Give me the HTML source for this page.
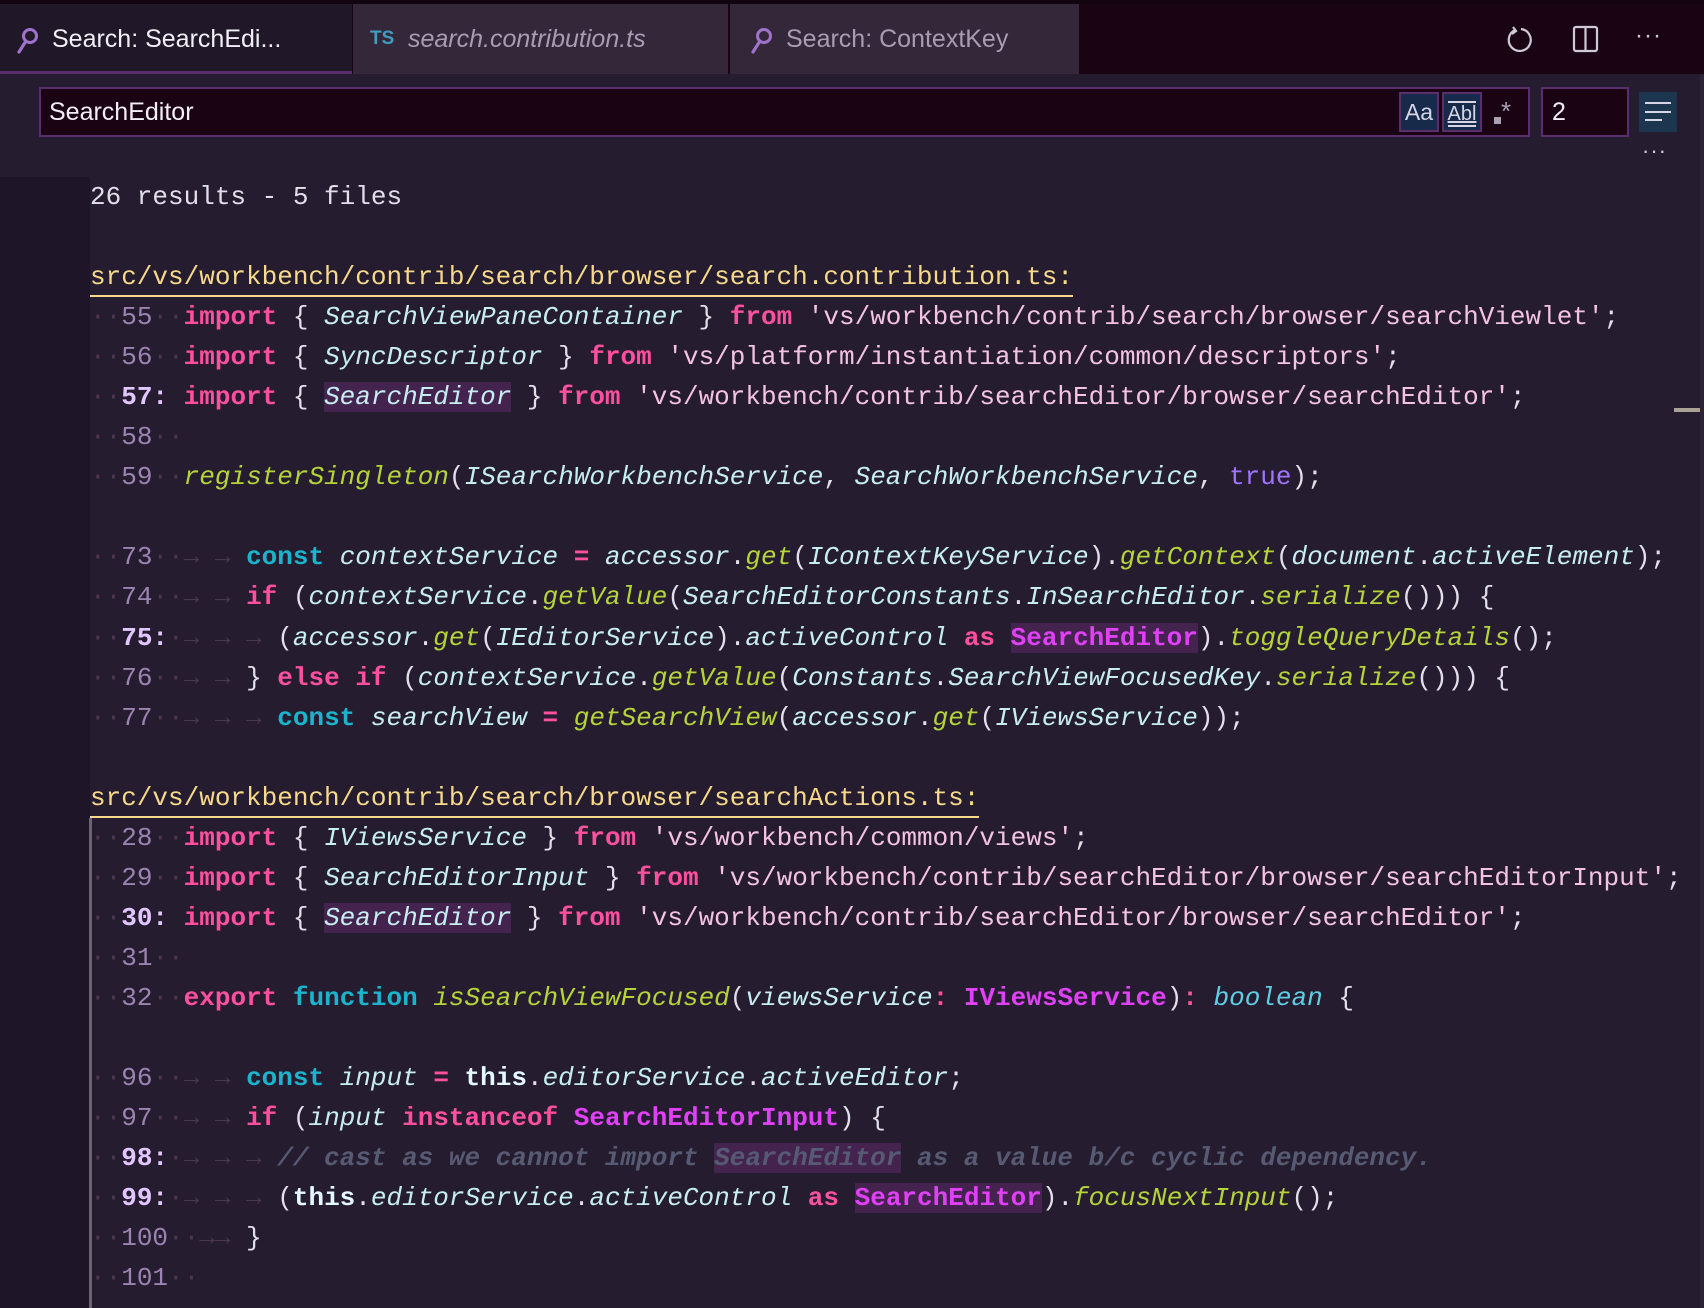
<!DOCTYPE html>
<html><head><meta charset="utf-8">
<style>
*{margin:0;padding:0;box-sizing:border-box}
html,body{width:1704px;height:1308px;overflow:hidden;background:#251c2f}
body{position:relative;font-family:"Liberation Sans",sans-serif}
.topb{position:absolute;left:0;top:0;width:1704px;height:4px;background:#120410}
.tabbar{position:absolute;left:0;top:4px;width:1704px;height:70px;background:#1a0414}
.tab{position:absolute;top:0;height:70px;font-size:25px;line-height:70px;white-space:nowrap}
.t1{left:0;width:352px;background:#201729;color:#f2eef6;border-bottom:3px solid #5a2d6e}
.t2{left:352px;width:376px;background:#332739;color:#a99cb2;font-style:italic;border-left:1px solid #1a0414}
.t3{left:729px;width:350px;background:#332739;color:#a99cb2;border-left:1px solid #1a0414}
.tab svg{position:absolute;top:23px}
.ts{position:absolute;left:370px;top:4px;height:70px;line-height:70px;font-weight:bold;color:#3f9dc2;font-size:19px}
.ico{position:absolute}
.sbox{position:absolute;left:39px;top:87px;width:1491px;height:50px;background:#1a0414;border:2px solid #5a2d6e}
.sbox .q{position:absolute;left:8px;top:0;line-height:46px;font-size:25px;color:#f2eef6}
.btn{position:absolute;top:92px;height:40px;background:#172a4a;border:2px solid #5a2d6e;color:#d6d6e6;font-size:23px;text-align:center;line-height:36px}
.cbox{position:absolute;left:1541px;top:87px;width:88px;height:50px;background:#1a0414;border:2px solid #5a2d6e;color:#f2eef6;font-size:25px;line-height:46px;padding-left:9px}
.gut{position:absolute;left:0;top:177px;width:90px;height:1131px;background:#1e1628}
.vline{position:absolute;left:89px;top:818px;width:3px;height:490px;background:#6a6470}
.code{position:absolute;left:90px;top:177px;font-family:"Liberation Mono",monospace;font-size:26px;color:#e2deea}
.r{height:40.05px;line-height:40.05px;white-space:pre}
.w{color:#4a3650}
.n{color:#9c84b2}
.nb{color:#e2c6ff;font-weight:bold}
.k{color:#ff4f9f;font-weight:bold}
.c{color:#1bb4cc;font-weight:bold}
.i{color:#c6eef2;font-style:italic}
.f{color:#b4d43a;font-style:italic}
.s{color:#f4c2e4}
.tr{color:#a074ff}
.m{color:#e040f6;font-weight:bold}
.th{color:#e4f8ff;font-weight:bold}
.bo{color:#5fcde4;font-style:italic}
.cm{color:#565a72;font-style:italic;font-weight:bold}
.hl{background:#44244f}
.hd{color:#f6d98a;border-bottom:2px solid #f6d98a;display:inline-block;line-height:36px}
</style></head><body>
<div class="topb"></div>
<div class="tabbar"></div>
<div class="tab t1" style="top:4px"><svg style="left:16px" width="24" height="28" viewBox="0 0 24 28"><circle cx="14" cy="9" r="6.5" fill="none" stroke="#a072cc" stroke-width="3"/><line x1="10" y1="14" x2="3" y2="25" stroke="#a072cc" stroke-width="3.2" stroke-linecap="round"/></svg><span style="position:absolute;left:52px">Search: SearchEdi...</span></div>
<div class="tab t2" style="top:4px"><span style="position:absolute;left:55px">search.contribution.ts</span></div>
<div class="ts">TS</div>
<div class="tab t3" style="top:4px"><svg style="left:20px" width="24" height="28" viewBox="0 0 24 28"><circle cx="14" cy="9" r="6.5" fill="none" stroke="#a072cc" stroke-width="3"/><line x1="10" y1="14" x2="3" y2="25" stroke="#a072cc" stroke-width="3.2" stroke-linecap="round"/></svg><span style="position:absolute;left:56px">Search: ContextKey</span></div>
<svg class="ico" style="left:1505px;top:25px" width="30" height="30" viewBox="0 0 30 30"><path d="M10 5 A11 11 0 1 0 16 4" fill="none" stroke="#cfcad6" stroke-width="2.2"/><path d="M8 2 L11 6 L7 9" fill="none" stroke="#cfcad6" stroke-width="2.2"/></svg>
<svg class="ico" style="left:1572px;top:25px" width="28" height="28" viewBox="0 0 28 28"><rect x="2" y="2" width="23" height="24" rx="2" fill="none" stroke="#cfcad6" stroke-width="2.2"/><line x1="13.5" y1="2" x2="13.5" y2="26" stroke="#cfcad6" stroke-width="2.2"/></svg>
<div class="ico" style="left:1635px;top:22px;color:#cfcad6;font-size:24px;letter-spacing:1px">···</div>
<div class="sbox"><div class="q">SearchEditor</div></div>
<div class="btn" style="left:1399px;width:40px">Aa</div>
<div class="btn" style="left:1442px;width:40px"><span style="border-top:2px solid #d6d6e6;border-bottom:2px solid #d6d6e6;font-size:20px;line-height:22px;display:inline-block;margin-top:5px;text-decoration:underline">Abl</span></div>
<div class="ico" style="left:1494px;top:96px;color:#a8a0b0;font-size:26px"><span style="display:inline-block;width:7px;height:7px;background:#a8a0b0;vertical-align:-4px"></span>*</div>
<div class="cbox">2</div>
<div class="ico" style="left:1639px;top:92px;width:38px;height:40px;background:#1c3650"><div style="position:absolute;left:6px;top:10px;width:26px;height:2px;background:#d6d6e6"></div><div style="position:absolute;left:6px;top:19px;width:26px;height:2px;background:#d6d6e6"></div><div style="position:absolute;left:6px;top:27px;width:17px;height:2px;background:#d6d6e6"></div></div>
<div class="ico" style="left:1642px;top:138px;color:#cfcad6;font-size:22px;letter-spacing:1px">···</div>
<div class="ico" style="left:1674px;top:408px;width:26px;height:4px;background:#aaa294"></div>
<div class="ico" style="left:1700px;top:74px;width:4px;height:1234px;background:#2c2336"></div>
<div class="gut"></div>
<div class="vline"></div>
<div class="code"><div class="r">26 results - 5 files</div><div class="r"> </div><div class="r"><span class="hd">src/vs/workbench/contrib/search/browser/search.contribution.ts:</span></div><div class="r"><span class="w">··</span><span class="n">55</span><span class="w">··</span><span class="k">import</span> { <span class="i">SearchViewPaneContainer</span> } <span class="k">from</span> <span class="s">'vs/workbench/contrib/search/browser/searchViewlet'</span>;</div><div class="r"><span class="w">··</span><span class="n">56</span><span class="w">··</span><span class="k">import</span> { <span class="i">SyncDescriptor</span> } <span class="k">from</span> <span class="s">'vs/platform/instantiation/common/descriptors'</span>;</div><div class="r"><span class="w">··</span><span class="nb">57:</span><span class="w"> </span><span class="k">import</span> { <span class="i hl">SearchEditor</span> } <span class="k">from</span> <span class="s">'vs/workbench/contrib/searchEditor/browser/searchEditor'</span>;</div><div class="r"><span class="w">··</span><span class="n">58</span><span class="w">··</span></div><div class="r"><span class="w">··</span><span class="n">59</span><span class="w">··</span><span class="f">registerSingleton</span>(<span class="i">ISearchWorkbenchService</span>, <span class="i">SearchWorkbenchService</span>, <span class="tr">true</span>);</div><div class="r"> </div><div class="r"><span class="w">··</span><span class="n">73</span><span class="w">··→ → </span><span class="c">const</span> <span class="i">contextService</span> <span class="k">=</span> <span class="i">accessor</span>.<span class="f">get</span>(<span class="i">IContextKeyService</span>).<span class="f">getContext</span>(<span class="i">document</span>.<span class="i">activeElement</span>);</div><div class="r"><span class="w">··</span><span class="n">74</span><span class="w">··→ → </span><span class="k">if</span> (<span class="i">contextService</span>.<span class="f">getValue</span>(<span class="i">SearchEditorConstants</span>.<span class="i">InSearchEditor</span>.<span class="f">serialize</span>())) {</div><div class="r"><span class="w">··</span><span class="nb">75:</span><span class="w">·→ → → </span>(<span class="i">accessor</span>.<span class="f">get</span>(<span class="i">IEditorService</span>).<span class="i">activeControl</span> <span class="k">as</span> <span class="m hl">SearchEditor</span>).<span class="f">toggleQueryDetails</span>();</div><div class="r"><span class="w">··</span><span class="n">76</span><span class="w">··→ → </span>} <span class="k">else</span> <span class="k">if</span> (<span class="i">contextService</span>.<span class="f">getValue</span>(<span class="i">Constants</span>.<span class="i">SearchViewFocusedKey</span>.<span class="f">serialize</span>())) {</div><div class="r"><span class="w">··</span><span class="n">77</span><span class="w">··→ → → </span><span class="c">const</span> <span class="i">searchView</span> <span class="k">=</span> <span class="f">getSearchView</span>(<span class="i">accessor</span>.<span class="f">get</span>(<span class="i">IViewsService</span>));</div><div class="r"> </div><div class="r"><span class="hd">src/vs/workbench/contrib/search/browser/searchActions.ts:</span></div><div class="r"><span class="w">··</span><span class="n">28</span><span class="w">··</span><span class="k">import</span> { <span class="i">IViewsService</span> } <span class="k">from</span> <span class="s">'vs/workbench/common/views'</span>;</div><div class="r"><span class="w">··</span><span class="n">29</span><span class="w">··</span><span class="k">import</span> { <span class="i">SearchEditorInput</span> } <span class="k">from</span> <span class="s">'vs/workbench/contrib/searchEditor/browser/searchEditorInput'</span>;</div><div class="r"><span class="w">··</span><span class="nb">30:</span><span class="w"> </span><span class="k">import</span> { <span class="i hl">SearchEditor</span> } <span class="k">from</span> <span class="s">'vs/workbench/contrib/searchEditor/browser/searchEditor'</span>;</div><div class="r"><span class="w">··</span><span class="n">31</span><span class="w">··</span></div><div class="r"><span class="w">··</span><span class="n">32</span><span class="w">··</span><span class="k">export</span> <span class="c">function</span> <span class="f">isSearchViewFocused</span>(<span class="i">viewsService</span><span class="k">:</span> <span class="m">IViewsService</span>)<span class="k">:</span> <span class="bo">boolean</span> {</div><div class="r"> </div><div class="r"><span class="w">··</span><span class="n">96</span><span class="w">··→ → </span><span class="c">const</span> <span class="i">input</span> <span class="k">=</span> <span class="th">this</span>.<span class="i">editorService</span>.<span class="i">activeEditor</span>;</div><div class="r"><span class="w">··</span><span class="n">97</span><span class="w">··→ → </span><span class="k">if</span> (<span class="i">input</span> <span class="k">instanceof</span> <span class="m">SearchEditorInput</span>) {</div><div class="r"><span class="w">··</span><span class="nb">98:</span><span class="w">·→ → → </span><span class="cm">// cast as we cannot import <span class="hl">SearchEditor</span> as a value b/c cyclic dependency.</span></div><div class="r"><span class="w">··</span><span class="nb">99:</span><span class="w">·→ → → </span>(<span class="th">this</span>.<span class="i">editorService</span>.<span class="i">activeControl</span> <span class="k">as</span> <span class="m hl">SearchEditor</span>).<span class="f">focusNextInput</span>();</div><div class="r"><span class="w">··</span><span class="n">100</span><span class="w">··→→ </span>}</div><div class="r"><span class="w">··</span><span class="n">101</span><span class="w">··</span></div></div>
</body></html>
